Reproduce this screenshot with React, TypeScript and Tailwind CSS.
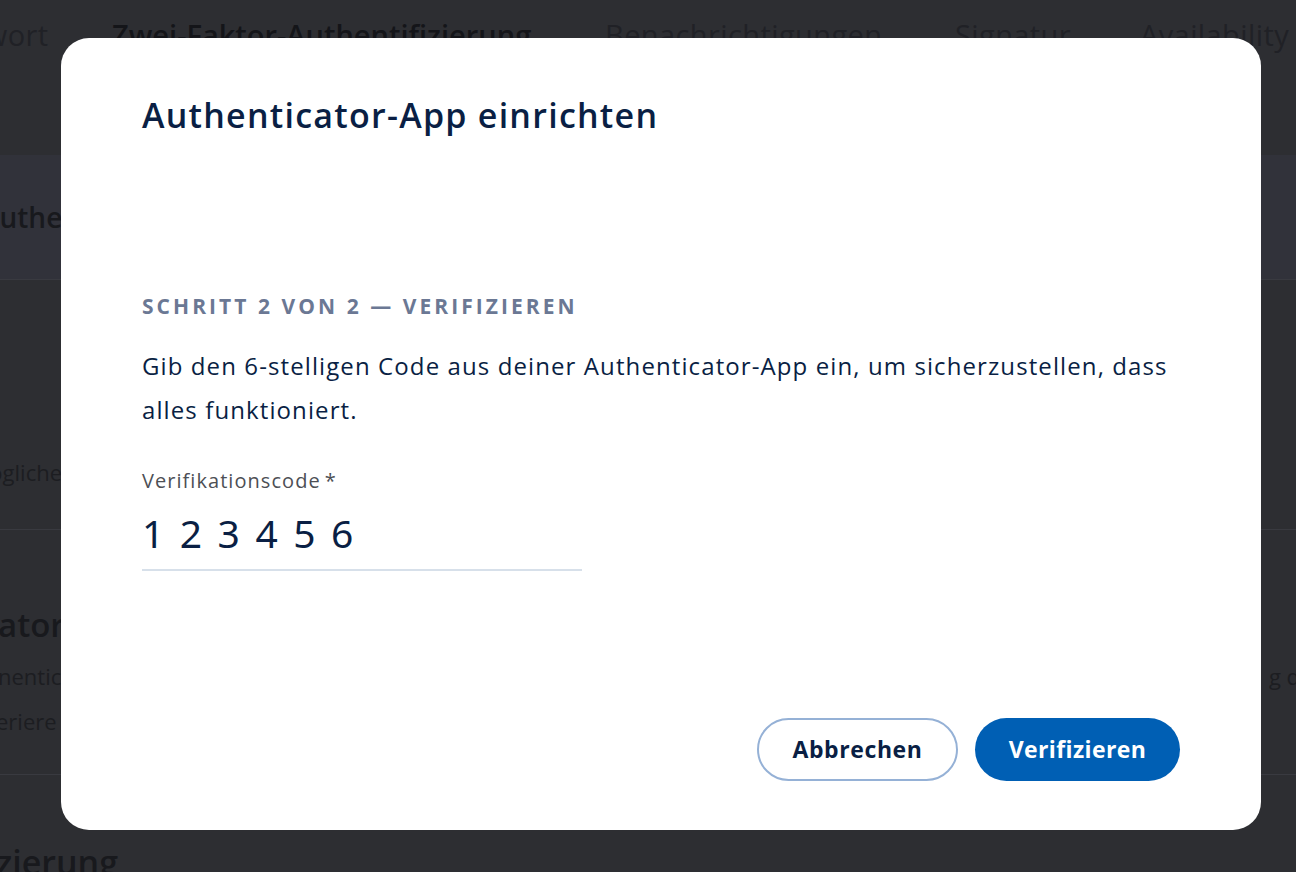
import React from "react";

const font = { fontFamily: '"Open Sans", "Liberation Sans", sans-serif' };

function Background() {
  return (
    <div className="h-[872px] w-[1296px] overflow-hidden bg-[#2d2e32] text-[#18191d]">
      {/* tabs */}
      <div className="flex h-[70px] items-center whitespace-nowrap text-[29px] tracking-[0.4px] text-[#202126]">
        <div className="-ml-[78px] w-[185px]">Passwort</div>
        <div className="w-[498px] pl-[5px] font-semibold tracking-[0px] text-[#141519]">Zwei-Faktor-Authentifizierung</div>
        <div className="w-[350px]">Benachrichtigungen</div>
        <div className="w-[185px]">Signatur</div>
        <div>Availability</div>
      </div>
      <div className="h-[85px]" />
      {/* band */}
      <div className="flex h-[125px] items-center border-b border-[#393a40] bg-[#31323a] text-[28px] font-semibold">
        <div className="-ml-[19px] whitespace-nowrap">Authenticator-App</div>
      </div>
      <div className="flex h-[250px] items-end border-b border-[#393a40] pb-[40px] text-[22px] text-[#1c1d21]">
        <div className="-ml-[31px] whitespace-nowrap">möglichen</div>
      </div>
      <div className="flex h-[245px] flex-col border-b border-[#393a40] pt-[70px]">
        <div className="-ml-[2px] whitespace-nowrap text-[33px] font-semibold">ator-App</div>
        <div className="mt-[4px] flex justify-between whitespace-nowrap text-[22px] leading-[45px] text-[#1c1d21]">
          <span className="-ml-[2px]">nentic</span>
          <span className="-mr-[4px]">g d</span>
        </div>
        <div className="-ml-[4px] whitespace-nowrap text-[22px] leading-[45px] text-[#1c1d21]">eriere</div>
      </div>
      <div className="pt-[62px] whitespace-nowrap text-[34px] font-semibold">
        <span className="-ml-[4px]">zierung</span>
      </div>
    </div>
  );
}

export default function App() {
  return (
    <div className="relative h-[872px] w-[1296px] overflow-hidden" style={font}>
      <Background />
      <div className="absolute left-[61px] top-[38px] flex h-[792px] w-[1200px] flex-col rounded-[28px] bg-white px-[81px] pb-[49px] pt-[57px] text-[#0a1f44]">
        <h1 className="text-[34px] font-semibold leading-[40px] tracking-[1.25px]">Authenticator-App einrichten</h1>
        <div className="mt-[157px] text-[21px] font-bold uppercase leading-[28px] tracking-[3.05px] text-[#6b7894]">
          Schritt 2 von 2 — Verifizieren
        </div>
        <p className="mt-[24px] w-[1045px] text-[24px] leading-[44px] tracking-[1.1px]">
          Gib den 6-stelligen Code aus deiner Authenticator-App ein, um sicherzustellen, dass alles funktioniert.
        </p>
        <label className="mt-[36px] text-[20px] leading-[26px] tracking-[1.05px] text-[#4d4f55]">
          Verifikationscode<span className="ml-[4px]">*</span>
        </label>
        <div className="mt-[15px] w-[440px] border-b-2 border-[#d7e0ea] pb-[12px]">
          <div
            className="text-[39px] leading-[48px] tracking-[15.5px] text-[#0a1f44]"
            style={{ fontFamily: '"Noto Sans", sans-serif' }}
          >
            123456
          </div>
        </div>
        <div className="mt-auto flex justify-end gap-[17px]">
          <button className="h-[63px] w-[201px] rounded-full border-2 border-[#95b1d6] bg-white text-[23px] font-bold tracking-[0.6px] text-[#0a1f44]">
            Abbrechen
          </button>
          <button className="h-[63px] w-[205px] rounded-full bg-[#005fb4] text-[23px] font-bold tracking-[0.4px] text-white">
            Verifizieren
          </button>
        </div>
      </div>
    </div>
  );
}
